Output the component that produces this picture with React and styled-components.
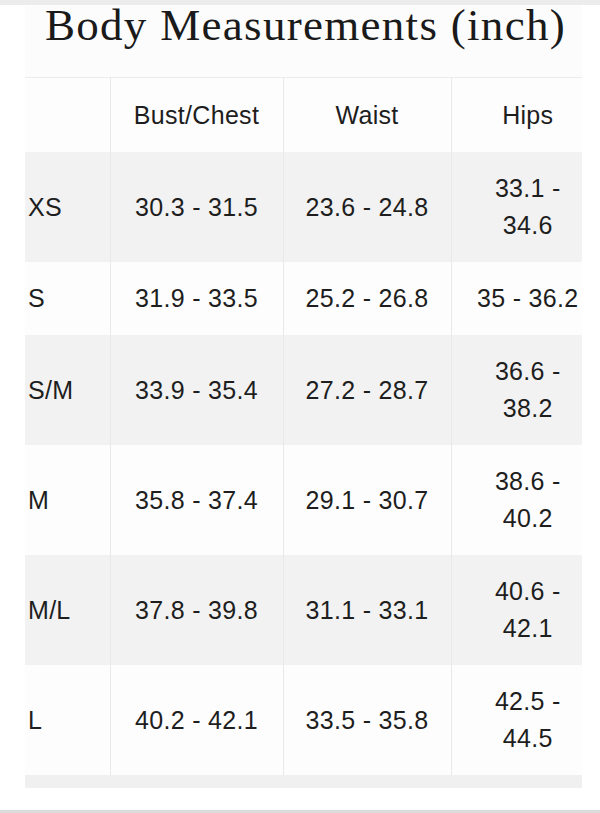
import React from 'react';
import styled, { createGlobalStyle } from 'styled-components';

const GlobalStyle = createGlobalStyle`
    html, body {
        margin: 0;
        padding: 0;
        background: #ffffff;
    }
`;

const COLUMN_WIDTHS = [85, 173, 168, 131];
const HEADERS = ['', 'Bust/Chest', 'Waist', 'Hips'];

const SIZES = [
    { size: 'XS', bust: '30.3 - 31.5', waist: '23.6 - 24.8', hips: ['33.1 -', '34.6'] },
    { size: 'S', bust: '31.9 - 33.5', waist: '25.2 - 26.8', hips: ['35 - 36.2'] },
    { size: 'S/M', bust: '33.9 - 35.4', waist: '27.2 - 28.7', hips: ['36.6 -', '38.2'] },
    { size: 'M', bust: '35.8 - 37.4', waist: '29.1 - 30.7', hips: ['38.6 -', '40.2'] },
    { size: 'M/L', bust: '37.8 - 39.8', waist: '31.1 - 33.1', hips: ['40.6 -', '42.1'] },
    { size: 'L', bust: '40.2 - 42.1', waist: '33.5 - 35.8', hips: ['42.5 -', '44.5'] }
];

const Page = styled.div`
    display: flex;
    flex-direction: column;
    height: 813px;
    overflow: hidden;
`;

const TopStrip = styled.div`
    height: 5px;
    flex: none;
    background: #ececec;
`;

const Sheet = styled.div`
    width: 557px;
    margin-left: 25px;
    background: #fcfcfc;
`;

// overlaps the top strip a little so the serif baseline sits where the photo has it
const Title = styled.h1`
    margin: -5px 0 27px;
    padding-left: 4px;
    font-family: "Liberation Serif", "DejaVu Serif", serif;
    font-weight: 400;
    font-size: 45px;
    line-height: 50px;
    letter-spacing: 1.3px;
    color: #1a1a1a;
    text-align: center;
    white-space: nowrap;
`;

const Table = styled.table`
    width: 557px;
    table-layout: fixed;
    border-collapse: collapse;
    font-family: "Liberation Sans", Arial, sans-serif;
    font-size: 25px;
    letter-spacing: 0.3px;
    color: #1e1e1e;
    border-top: 1px solid #ececec;
`;

const Row = styled.tr`
    background: ${props => props.$shaded ? '#f2f2f2' : '#fdfdfd'};
`;

const Cell = styled.td`
    padding: 18px 0;
    line-height: 37px;
    font-weight: 400;
    vertical-align: middle;
    white-space: nowrap;
    text-align: ${props => props.$label ? 'left' : 'center'};
    padding-left: ${props => props.$label ? 3 : props.$last ? 22 : 0}px;
    & + & {
        border-left: 1px solid #e9e9e9;
    }
`;

const HeadCell = styled(Cell).attrs({ as: 'th' })`
    padding-top: 19px;
`;

const Line = styled.div``;

const FooterStrip = styled.div`
    height: 13px;
    background: #f0f0f0;
`;

const BottomBar = styled.div`
    margin-top: auto;
    height: 3px;
    flex: none;
    background: #dcdcdc;
`;

const SizeRow = ({ item, shaded }) => (
    <Row $shaded={shaded}>
        <Cell $label>{item.size}</Cell>
        <Cell>{item.bust}</Cell>
        <Cell>{item.waist}</Cell>
        <Cell $last>
            {item.hips.map(line => <Line key={line}>{line}</Line>)}
        </Cell>
    </Row>
);

export default function App() {
    return (
        <Page>
            <GlobalStyle />
            <TopStrip />
            <Sheet>
                <Title>Body Measurements (inch)</Title>
                <Table>
                    <colgroup>
                        {COLUMN_WIDTHS.map((w, i) => <col key={i} style={{ width: w }} />)}
                    </colgroup>
                    <thead>
                        <Row>
                            {HEADERS.map((h, i) => (
                                <HeadCell key={i} $last={i === 3}>{h}</HeadCell>
                            ))}
                        </Row>
                    </thead>
                    <tbody>
                        {SIZES.map((item, i) => <SizeRow key={item.size} item={item} shaded={i % 2 === 0} />)}
                    </tbody>
                </Table>
                <FooterStrip />
            </Sheet>
            <BottomBar />
        </Page>
    );
}
